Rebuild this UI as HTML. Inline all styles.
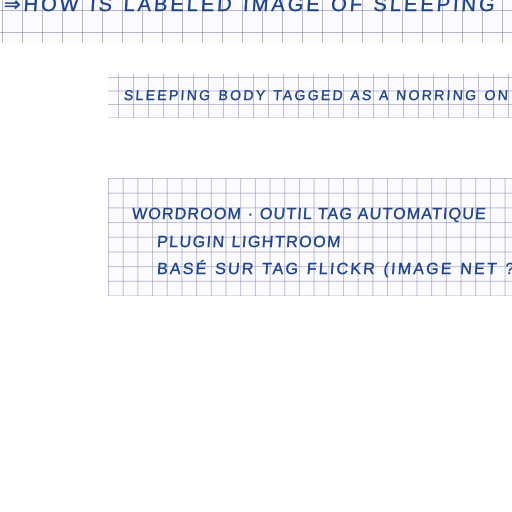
<!DOCTYPE html>
<html><head><style>
body{margin:0;width:512px;height:512px;background:#fff;position:relative;overflow:hidden;font-family:"Liberation Sans",sans-serif;color:#1e4595}
.g{position:absolute;background-color:#fbfbfd;}
.t{position:absolute;white-space:nowrap;font-size:15px;letter-spacing:1px;transform:skewX(-4deg);-webkit-text-stroke:0.4px #1e4595}
</style></head><body>
<div class="g" style="left:0;top:0;width:512px;height:43px;background-image:linear-gradient(90deg,rgba(130,130,175,.55) 1px,transparent 1px),linear-gradient(rgba(130,130,175,.55) 1px,transparent 1px);background-size:20px 22px;background-position:2px 10px"></div>
<div class="g" style="left:108px;top:74px;width:404px;height:44px;background-image:linear-gradient(90deg,rgba(130,130,175,.5) 1px,transparent 1px),linear-gradient(rgba(130,130,175,.5) 1px,transparent 1px);background-size:15px 13.5px;background-position:10px 3px"></div>
<div class="g" style="left:108px;top:178px;width:404px;height:118px;background-image:linear-gradient(90deg,rgba(130,130,175,.5) 1px,transparent 1px),linear-gradient(rgba(130,130,175,.5) 1px,transparent 1px);background-size:14.7px 14.7px;background-position:0 0"></div>
<div class="t" style="left:4px;top:-8px;font-size:20px;letter-spacing:3px">⇒HOW IS LABELED IMAGE OF SLEEPING</div>
<div class="t" style="left:124px;top:87px;font-size:14px;letter-spacing:2.3px">SLEEPING BODY TAGGED AS A NORRING ON</div>
<div class="t" style="left:132px;top:206px;font-size:16px;letter-spacing:1.2px">WORDROOM · OUTIL TAG AUTOMATIQUE</div>
<div class="t" style="left:157px;top:234px;font-size:16px;letter-spacing:1.5px">PLUGIN LIGHTROOM</div>
<div class="t" style="left:157px;top:261px;font-size:16px;letter-spacing:2.2px">BASÉ SUR TAG FLICKR (IMAGE NET ?¿</div>
</body></html>
